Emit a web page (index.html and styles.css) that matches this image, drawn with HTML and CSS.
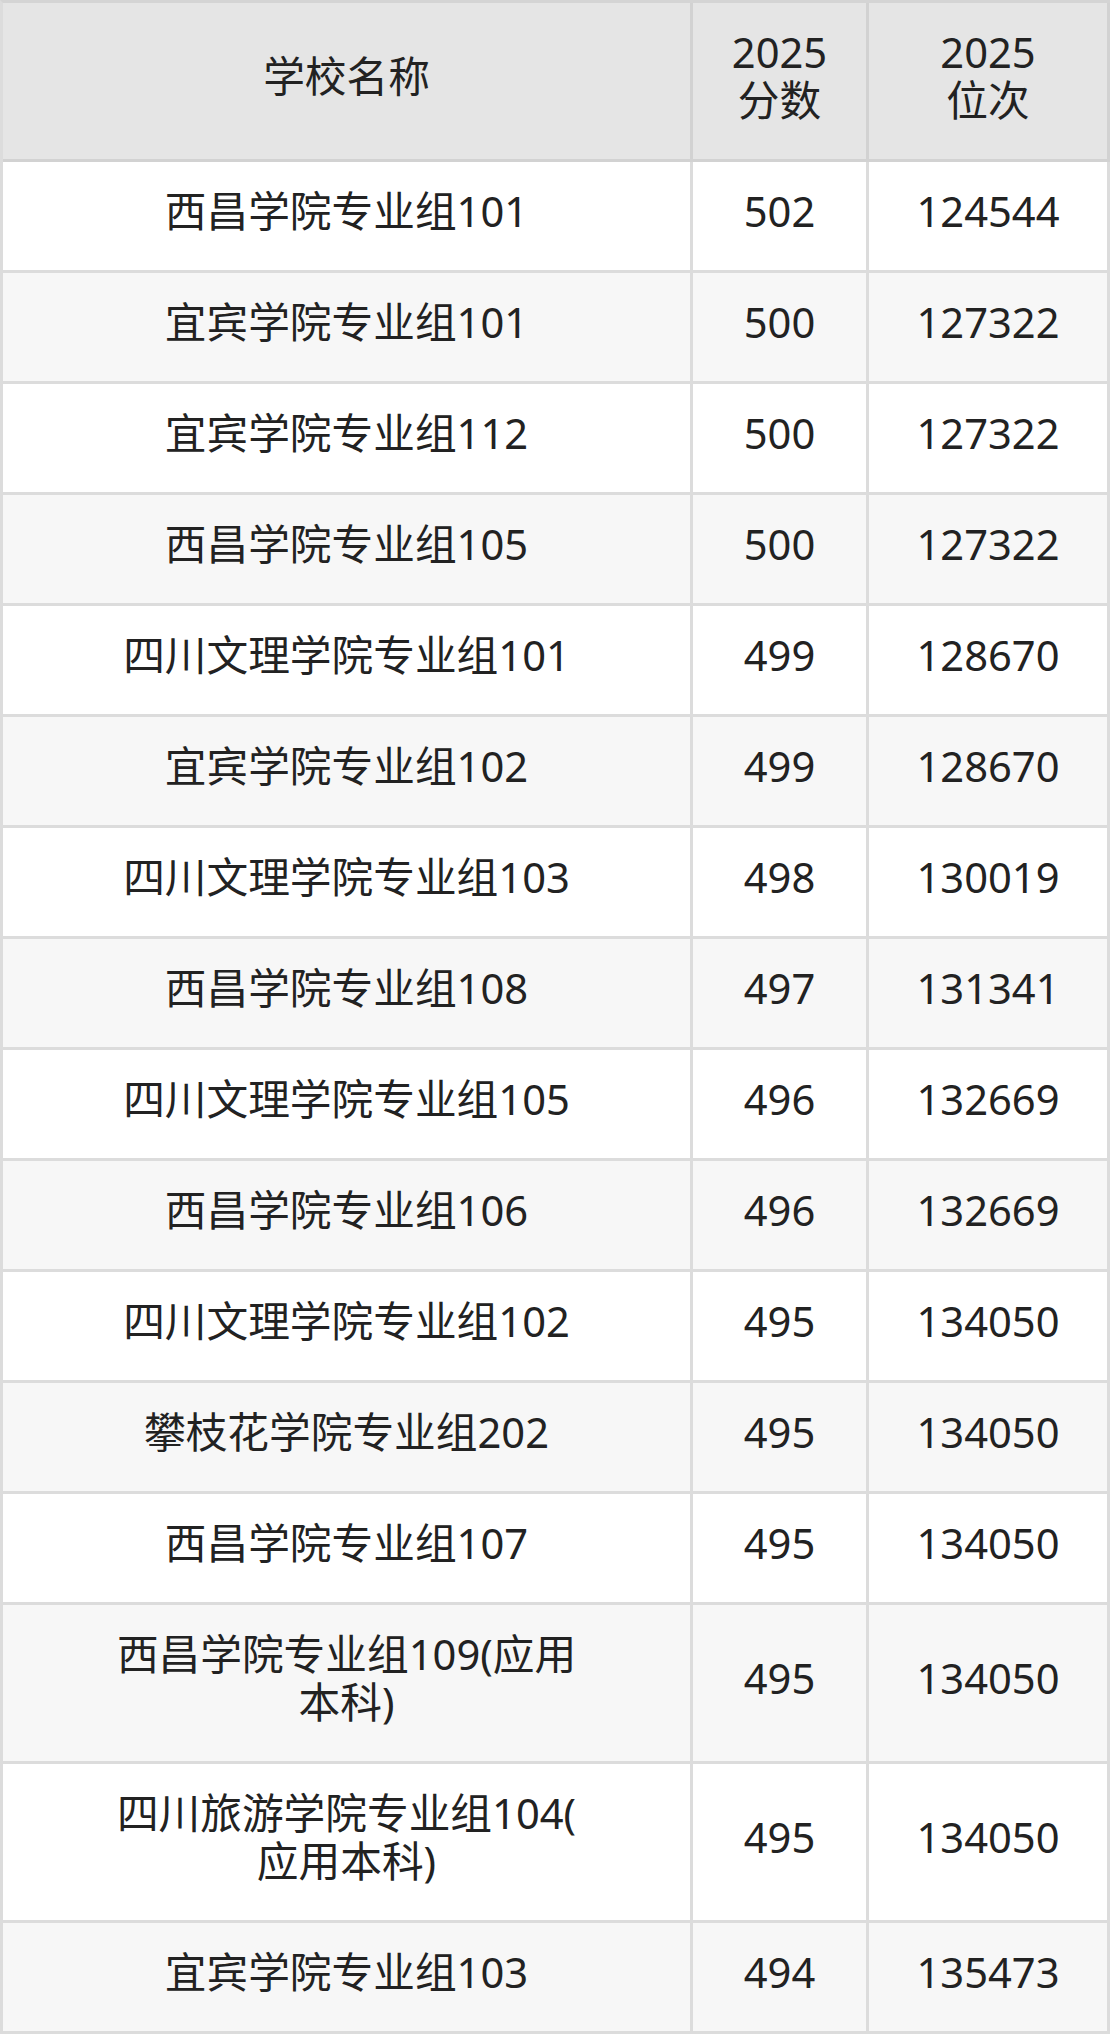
FILE: index.html
```html
<!DOCTYPE html>
<html lang="zh-CN">
<head>
<meta charset="utf-8">
<title>2025 分数 位次</title>
<link rel="stylesheet" href="styles.css">
</head>
<body>
<div class="score-table">
  <div class="cell head name">学校名称</div>
  <div class="cell head">2025<br>分数</div>
  <div class="cell head">2025<br>位次</div>

  <div class="cell name">西昌学院专业组101</div><div class="cell">502</div><div class="cell">124544</div>
  <div class="cell name alt">宜宾学院专业组101</div><div class="cell alt">500</div><div class="cell alt">127322</div>
  <div class="cell name">宜宾学院专业组112</div><div class="cell">500</div><div class="cell">127322</div>
  <div class="cell name alt">西昌学院专业组105</div><div class="cell alt">500</div><div class="cell alt">127322</div>
  <div class="cell name">四川文理学院专业组101</div><div class="cell">499</div><div class="cell">128670</div>
  <div class="cell name alt">宜宾学院专业组102</div><div class="cell alt">499</div><div class="cell alt">128670</div>
  <div class="cell name">四川文理学院专业组103</div><div class="cell">498</div><div class="cell">130019</div>
  <div class="cell name alt">西昌学院专业组108</div><div class="cell alt">497</div><div class="cell alt">131341</div>
  <div class="cell name">四川文理学院专业组105</div><div class="cell">496</div><div class="cell">132669</div>
  <div class="cell name alt">西昌学院专业组106</div><div class="cell alt">496</div><div class="cell alt">132669</div>
  <div class="cell name">四川文理学院专业组102</div><div class="cell">495</div><div class="cell">134050</div>
  <div class="cell name alt">攀枝花学院专业组202</div><div class="cell alt">495</div><div class="cell alt">134050</div>
  <div class="cell name">西昌学院专业组107</div><div class="cell">495</div><div class="cell">134050</div>
  <div class="cell name alt">西昌学院专业组109(应用本科)</div><div class="cell alt">495</div><div class="cell alt">134050</div>
  <div class="cell name">四川旅游学院专业组104(应用本科)</div><div class="cell">495</div><div class="cell">134050</div>
  <div class="cell name alt">宜宾学院专业组103</div><div class="cell alt">494</div><div class="cell alt">135473</div>
</div>
</body>
</html>
```
FILE: styles.css
```css
html, body {
  margin: 0;
  padding: 0;
  background: #ffffff;
}

.score-table {
  display: grid;
  grid-template-columns: 690px 176px 241px;
  width: 1110px;
  box-sizing: border-box;
  border-left: 3px solid #dcdcdc;
  border-top: 3px solid #d4d4d4;
  font-family: "Noto Sans", "Noto Sans CJK SC", sans-serif;
  font-size: 41.7px;
  line-height: 48px;
  color: #222222;
}

.cell {
  box-sizing: border-box;
  display: block;
  align-content: center;
  text-align: center;
  padding: 25px 8px 35px;
  border-right: 3px solid #dcdcdc;
  border-bottom: 3px solid #dcdcdc;
  background: #ffffff;
  line-break: anywhere;
  word-break: break-all;
}

.cell.name {
  padding-left: 104px;
  padding-right: 104px;
}

.cell.alt {
  background: #f7f7f7;
}

.cell.head {
  background: #e5e5e5;
  border-color: #d2d2d2;
}
```
